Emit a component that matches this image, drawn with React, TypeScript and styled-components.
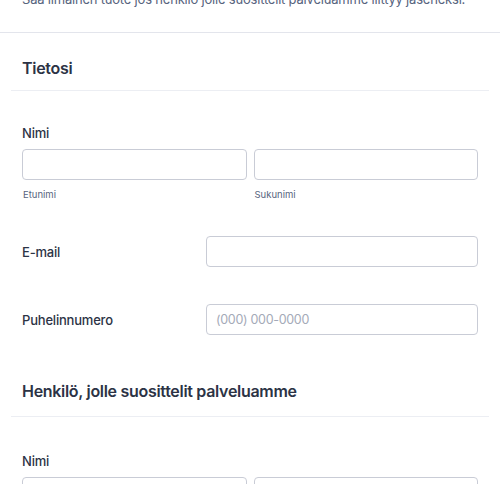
import styled, { createGlobalStyle } from 'styled-components';

const GlobalStyle = createGlobalStyle`
  html, body {
    margin: 0;
    padding: 0;
    background: #ffffff;
  }

  body {
    font-family: Inter, "Noto Sans", sans-serif;
    color: #2c3345;
    overflow: hidden;
  }
`;

const Page = styled.div`
  width: 500px;
  margin-top: -3px;
`;

const Intro = styled.header`
  padding: 0 22px 21px;
  border-bottom: 1px solid #e3e5ec;
`;

const Description = styled.p`
  margin: -13px 0 0;
  font-size: 13px;
  line-height: 24px;
  letter-spacing: -0.2px;
  white-space: nowrap;
  color: #57647e;
`;

const Section = styled.section`
  padding: 0 11px;
`;

const SectionHead = styled.div<{ $top: number; $bottom: number }>`
  padding: ${(p) => p.$top}px 11px ${(p) => p.$bottom}px;
  border-bottom: 1px solid #eceef3;
`;

const SectionTitle = styled.h2`
  margin: 0;
  font-size: 16px;
  line-height: 24px;
  font-weight: 600;
  letter-spacing: -0.3px;
  color: #2c3345;
`;

const Field = styled.div<{ $top: number }>`
  padding: ${(p) => p.$top}px 11px 0;
`;

const InlineField = styled.div<{ $top: number }>`
  padding: ${(p) => p.$top}px 11px 0;
  display: grid;
  grid-template-columns: 184px 1fr;
  align-items: center;
`;

const Label = styled.label`
  display: block;
  font-size: 13px;
  line-height: 20px;
  font-weight: 500;
  letter-spacing: -0.2px;
  color: #2c3345;
`;

const NameGrid = styled.div`
  margin-top: 6px;
  display: grid;
  grid-template-columns: 1fr 1fr;
  gap: 7px;
`;

const NamePart = styled.div`
  display: flex;
  flex-direction: column;
`;

const Input = styled.input`
  box-sizing: border-box;
  width: 100%;
  height: 31px;
  padding: 0 9px;
  border: 1px solid #c9ccd6;
  border-radius: 4px;
  font-family: inherit;
  font-size: 12.5px;
  letter-spacing: -0.3px;
  color: #2c3345;
  background: #fff;
  outline: none;

  &::placeholder {
    color: #a4aab8;
  }
`;

const SubLabel = styled.span`
  margin-top: 8px;
  padding-left: 1px;
  font-size: 9.5px;
  line-height: 14px;
  color: #57647e;
`;

function NameField({ top }: { top: number }) {
  return (
    <Field $top={top}>
      <Label>Nimi</Label>
      <NameGrid>
        <NamePart>
          <Input type="text" />
          <SubLabel>Etunimi</SubLabel>
        </NamePart>
        <NamePart>
          <Input type="text" />
          <SubLabel>Sukunimi</SubLabel>
        </NamePart>
      </NameGrid>
    </Field>
  );
}

export default function App() {
  return (
    <>
      <GlobalStyle />
      <Page>
        <Intro>
          <Description>
            Saa ilmainen tuote jos henkilö jolle suosittelit palveluamme liittyy jäseneksi.
          </Description>
        </Intro>

        <Section>
          <SectionHead $top={23} $bottom={10}>
            <SectionTitle>Tietosi</SectionTitle>
          </SectionHead>
          <NameField top={32} />
          <InlineField $top={34}>
            <Label>E-mail</Label>
            <Input type="email" />
          </InlineField>
          <InlineField $top={37}>
            <Label>Puhelinnumero</Label>
            <Input type="tel" placeholder="(000) 000-0000" />
          </InlineField>
        </Section>

        <Section>
          <SectionHead $top={44} $bottom={13}>
            <SectionTitle>Henkilö, jolle suosittelit palveluamme</SectionTitle>
          </SectionHead>
          <NameField top={34} />
        </Section>
      </Page>
    </>
  );
}
